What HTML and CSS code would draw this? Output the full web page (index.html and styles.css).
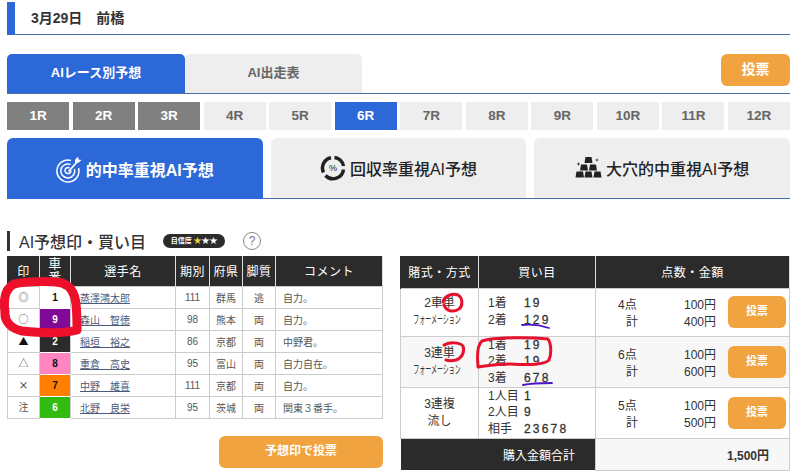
FILE: index.html

```html
<!DOCTYPE html>
<html>
<head>
	<meta charset="utf-8">
	<title>AI予想</title>
	<link rel="stylesheet" href="styles.css">
</head>
<body>
	<div class="race-head">3月29日　前橋</div>

	<div class="tabs">
		<a class="tab active">AIレース別予想</a>
		<a class="tab">AI出走表</a>
		<a class="btn vote-top">投票</a>
	</div>

	<div class="races">
		<a class="race done">1R</a>
		<a class="race done">2R</a>
		<a class="race done">3R</a>
		<a class="race">4R</a>
		<a class="race">5R</a>
		<a class="race now">6R</a>
		<a class="race">7R</a>
		<a class="race">8R</a>
		<a class="race">9R</a>
		<a class="race">10R</a>
		<a class="race">11R</a>
		<a class="race">12R</a>
	</div>

	<div class="modes">
		<a class="mode active">
			<svg class="mode-icon" viewBox="0 0 26 28" fill="none" stroke="#fff" stroke-width="1.5">
				<path d="M15 5.5A11 11 0 1 0 22.500 13"/>
				<path d="M14.500 9.500A7 7 0 1 0 18.500 14"/>
				<path d="M13.500 13A3 3 0 1 0 15 15.500"/>
				<path d="M12.500 16.500L21 7" stroke-width="1.800"/>
				<path d="M19 5l3-3.500 .5 3 3 .5-3.500 3-3-.5z" fill="#fff" stroke="none"/>
			</svg>
			的中率重視AI予想
		</a>
		<a class="mode">
			<span class="donut">
				<svg viewBox="0 0 26 26" fill="none" stroke="#222" stroke-width="3.500">
					<path d="M14.500 2.500A10.500 10.500 0 0 1 23.500 11"/>
					<path d="M23.500 14.500A10.500 10.500 0 0 1 5.500 20.500"/>
					<path d="M3.500 17.500A10.500 10.500 0 0 1 11 2.700"/>
				</svg>
				<span class="pct">%</span>
			</span>
			回収率重視AI予想
		</a>
		<a class="mode">
			<svg class="mode-icon gold" viewBox="0 0 27 22" fill="#222">
				<path d="M10.500 1h6l1 6h-8z"/>
				<path d="M6 8.500h6l1 6H5zM15 8.500h6l1 6h-8z"/>
				<path d="M1.500 15.500h6.500l1 6H.500zM10.500 15.500h6l1 6h-8zM19.500 15.500h6l1 6h-8z"/>
				<path d="M3.500 6l.5 1.500L5.500 8 4 8.500 3.500 10 3 8.500 1.500 8 3 7.500zM22 2l.4 1.600L24 4l-1.600.4L22 6l-.4-1.600L20 4l1.600-.4z"/>
			</svg>
			大穴的中重視AI予想
		</a>
	</div>

	<div class="section-title">
		<h2>AI予想印・買い目</h2>
		<span class="trust">自信度 <i class="star-on">★</i><i>★★</i></span>
		<span class="help">?</span>
	</div>

	<div class="columns">
		<div class="left">
			<table class="players">
				<colgroup>
					<col class="c-mark"><col class="c-num"><col class="c-name"><col class="c-term"><col class="c-pref"><col class="c-leg"><col>
				</colgroup>
				<thead>
					<tr><th>印</th><th class="tight">車<br>番</th><th>選手名</th><th>期別</th><th>府県</th><th>脚質</th><th>コメント</th></tr>
				</thead>
				<tbody>
					<tr><td class="mark">◎</td><td class="num n1">1</td><td class="name"><a>蒸澤鴻太郎</a></td><td>111</td><td>群馬</td><td>逃</td><td class="note">自力。</td></tr>
					<tr><td class="mark">○</td><td class="num n9">9</td><td class="name"><a>森山　智徳</a></td><td>98</td><td>熊本</td><td>両</td><td class="note">自力。</td></tr>
					<tr><td class="mark dark">▲</td><td class="num n2">2</td><td class="name"><a>稲垣　裕之</a></td><td>86</td><td>京都</td><td>両</td><td class="note">中野君。</td></tr>
					<tr><td class="mark">△</td><td class="num n8">8</td><td class="name"><a>重倉　高史</a></td><td>95</td><td>富山</td><td>両</td><td class="note">自力自在。</td></tr>
					<tr><td class="mark dark">×</td><td class="num n7">7</td><td class="name"><a>中野　雄喜</a></td><td>111</td><td>京都</td><td>両</td><td class="note">自力。</td></tr>
					<tr><td class="mark">注</td><td class="num n6">6</td><td class="name"><a>北野　良栄</a></td><td>95</td><td>茨城</td><td>両</td><td class="note">関東３番手。</td></tr>
				</tbody>
			</table>
			<div class="vote-wrap"><a class="btn vote-marks">予想印で投票</a></div>
		</div>

		<table class="bets">
			<colgroup><col class="c-type"><col class="c-pick"><col></colgroup>
			<thead>
				<tr><th>賭式・方式</th><th>買い目</th><th>点数・金額</th></tr>
			</thead>
			<tbody>
				<tr class="r1">
					<td class="type">2車単<br><span class="small"><span>フォーメーション</span></span></td>
					<td>
						<div class="pick"><span>1着</span><b>19</b><span>2着</span><b>129</b></div>
					</td>
					<td>
						<div class="money">
							<span>4点</span><span class="yen">100円</span>
							<span>計</span><span class="yen">400円</span>
							<a class="btn vote-row">投票</a>
						</div>
					</td>
				</tr>
				<tr class="r2">
					<td class="type">3連単<br><span class="small"><span>フォーメーション</span></span></td>
					<td>
						<div class="pick"><span>1着</span><b>19</b><span>2着</span><b>19</b><span>3着</span><b>678</b></div>
					</td>
					<td>
						<div class="money">
							<span>6点</span><span class="yen">100円</span>
							<span>計</span><span class="yen">600円</span>
							<a class="btn vote-row">投票</a>
						</div>
					</td>
				</tr>
				<tr class="r3">
					<td class="type">3連複<br>流し</td>
					<td>
						<div class="pick"><span>1人目</span><b>1</b><span>2人目</span><b>9</b><span>相手</span><b>23678</b></div>
					</td>
					<td>
						<div class="money">
							<span>5点</span><span class="yen">100円</span>
							<span>計</span><span class="yen">500円</span>
							<a class="btn vote-row">投票</a>
						</div>
					</td>
				</tr>
				<tr class="total">
					<th colspan="2">購入金額合計</th>
					<td>1,500円</td>
				</tr>
			</tbody>
		</table>
	</div>

	<!-- hand drawn marks on top of the screenshot -->
	<svg class="marks" viewBox="0 0 796 476" fill="none" stroke-linecap="round" stroke-linejoin="round">
		<path class="red-thick" d="M5 312C3 298 6 288 14 284C28 281 50 281 62 283C71 286 75 294 76 304C77 314 77 322 77 330C62 334 40 333 22 331C12 329 4 322 5 312Z"/>
		<path class="red-thin" d="M443 302C444 296 452 293 458 295C463 298 463 306 459 309C453 313 446 311 444 305"/>
		<path class="red-thin" d="M444 345C450 342 459 342 463 346C465 352 462 358 456 360C452 361 449 361 446 360"/>
		<path class="red-thin" d="M478 366C477 355 477 345 482 341C495 337 530 337 548 339C552 345 551 356 549 360C544 365 530 365 510 364C498 364 486 366 478 367"/>
		<path class="purple" d="M522 325C530 324 540 325 549 328"/>
		<path class="purple" d="M523 385C532 383 543 383 552 383"/>
	</svg>
</body>
</html>
```

FILE: styles.css

```css
* {
  box-sizing: border-box;
}
body {
  position: relative;
  width: 796px;
  height: 476px;
  margin: 0;
  padding: 2px 6px 0 7px;
  overflow: hidden;
  background: #fff;
  color: #333;
  font-family: "Liberation Sans", "Noto Sans CJK JP", sans-serif;
  font-size: 12px;
}
.race-head {
  height: 33px;
  padding-left: 16px;
  border-left: 8px solid #2d68d8;
  border-bottom: 1px solid #4a6ea8;
  font-size: 14px;
  font-weight: bold;
  line-height: 32px;
}

/* tabs */
.tabs {
  display: flex;
  height: 40px;
  margin-top: 19px;
  border-bottom: 1px solid #4a6ea8;
}
.tab {
  width: 178px;
  height: 39px;
  border-radius: 5px 5px 0 0;
  background: #eee;
  color: #666;
  font-size: 13px;
  font-weight: bold;
  line-height: 37px;
  text-align: center;
}
.tab:nth-child(2) {
  width: 177px;
}
.tab.active {
  background: #2d68d8;
  color: #fff;
}
.btn {
  display: block;
  border-radius: 6px;
  background: #f0a33f;
  color: #fff;
  font-weight: bold;
  text-align: center;
}
.vote-top {
  width: 69px;
  height: 32px;
  margin-left: auto;
  font-size: 14px;
  line-height: 31px;
}

/* race numbers */
.races {
  display: grid;
  grid-template-columns: repeat(12, 1fr);
  column-gap: 3.500px;
  margin-top: 8px;
}
.race {
  height: 28px;
  background: #eee;
  color: #666;
  font-size: 13.500px;
  font-weight: bold;
  line-height: 27px;
  text-align: center;
}
.race.done {
  background: #808080;
  color: #fff;
}
.race.now {
  background: #2d68d8;
  color: #fff;
}

/* big mode tabs */
.modes {
  display: grid;
  grid-template-columns: repeat(3, 1fr);
  column-gap: 8px;
  height: 61px;
  margin-top: 8px;
  border-bottom: 1px solid #4a6ea8;
}
.mode {
  display: flex;
  align-items: center;
  justify-content: center;
  height: 60px;
  border-radius: 6px 6px 0 0;
  background: #eee;
  color: #222;
  font-size: 16px;
  font-weight: 500;
}
.mode.active {
  height: 61px;
  background: #2d68d8;
  color: #fff;
  font-weight: bold;
}
.mode-icon {
  width: 26px;
  height: 28px;
  margin-right: 4px;
}
.mode-icon.gold {
  width: 27px;
  height: 22px;
  margin-bottom: 3px;
}
.donut {
  position: relative;
  width: 26px;
  height: 26px;
  margin-right: 4px;
}
.donut svg {
  display: block;
  width: 26px;
  height: 26px;
}
.pct {
  position: absolute;
  top: 0;
  left: 0;
  width: 26px;
  font-size: 9px;
  line-height: 26px;
  text-align: center;
}

/* section title */
.section-title {
  display: flex;
  align-items: center;
  height: 20px;
  margin-top: 32px;
  padding-left: 9px;
  border-left: 3px solid #333;
}
.section-title h2 {
  margin: 0;
  font-size: 16px;
  font-weight: 500;
}
.trust {
  width: 62px;
  height: 14px;
  margin-left: 17px;
  border-radius: 7px;
  background: #2b2b2b;
  color: #fff;
  font-size: 7px;
  font-weight: bold;
  line-height: 14px;
  text-align: center;
  white-space: nowrap;
}
.trust i {
  font-size: 8px;
  font-style: normal;
}
.trust .star-on {
  color: #f2cf3a;
}
.help {
  width: 18px;
  height: 18px;
  margin-left: 18px;
  border: 1px solid #888;
  border-radius: 50%;
  color: #777;
  font-size: 12px;
  line-height: 16px;
  text-align: center;
}

/* tables */
.columns {
  display: flex;
  align-items: flex-start;
  margin-top: 5px;
}
.left {
  width: 376px;
  margin-right: 17px;
}
table {
  border-collapse: collapse;
  table-layout: fixed;
}
th {
  background: #2b2b2b;
  color: #fff;
  font-weight: normal;
  text-align: center;
  border-left: 1px solid #ddd;
  border-right: 1px solid #ddd;
}
.players {
  width: 376px;
  font-size: 10px;
  color: #555;
}
.c-mark { width: 32px; }
.c-num { width: 31px; }
.c-name { width: 105px; }
.c-term { width: 34px; }
.c-pref { width: 33px; }
.c-leg { width: 33px; }
.players th {
  height: 30px;
  padding: 0;
  font-size: 12px;
  letter-spacing: 0.500px;
}
.players th:first-child,
.bets th:first-child {
  border-left-color: #2b2b2b;
}
.players th.tight {
  font-size: 13px;
  line-height: 14px;
}
.players td {
  height: 22px;
  padding: 0;
  border: 1px solid #ccc;
  text-align: center;
}
.players td.mark {
  font-family: "Noto Sans CJK JP", sans-serif;
  font-size: 10px;
  line-height: 14px;
}
.players td.dark {
  color: #111;
}
.players .num {
  border-top: 1px solid #fff;
  border-bottom: 1px solid #fff;
  font-weight: bold;
  color: #111;
}
.n1 { background: #fff; }
.n2 { background: #2b2b2b; color: #fff !important; }
.n6 { background: #33bb11; color: #fff !important; }
.n7 { background: #ff8000; }
.n8 { background: #ff85c0; }
.n9 { background: #800a96; color: #fff !important; }
.players td.name {
  padding-left: 9px;
  text-align: left;
}
.players td.note {
  padding-left: 7px;
  text-align: left;
}
.name a {
  color: #4a5a7a;
  text-decoration: underline;
}
.vote-wrap {
  display: flex;
  justify-content: flex-end;
  margin-top: 17px;
}
.vote-marks {
  width: 164px;
  height: 32px;
  font-size: 12px;
  line-height: 31px;
}

.bets {
  width: 390px;
  font-size: 12px;
}
.c-type { width: 78px; }
.c-pick { width: 117px; }
.bets thead th {
  height: 32px;
  padding: 0;
  font-size: 12px;
  letter-spacing: 0.500px;
}
.bets td {
  padding: 0;
  border: 1px solid #ccc;
}
.r1 td { height: 48px; }
.r2 td { height: 51px; background: #f7f7f7; }
.r3 td { height: 51px; }
.type {
  line-height: 17px;
  text-align: center;
}
.small {
  display: block;
  height: 17px;
  overflow: hidden;
  white-space: nowrap;
}
.small span {
  display: inline-block;
  width: 96px;
  margin-left: -12px;
  font-size: 12px;
  transform: scaleX(0.5);
}
.pick {
  display: grid;
  grid-template-columns: 36px auto;
  padding-left: 9px;
  line-height: 17px;
}
.r2 .pick,
.r3 .pick {
  line-height: 16.500px;
}
.pick b {
  letter-spacing: 2.200px;
  font-weight: normal;
  -webkit-text-stroke: 0.300px #333;
}
.money {
  display: grid;
  grid-template-columns: 20px 78px 70px;
  grid-template-rows: 17px 17px;
  align-items: center;
  padding-left: 22px;
  white-space: nowrap;
}
.money > span:nth-child(3) {
  text-align: right;
}
.yen {
  text-align: right;
}
.vote-row {
  grid-column: 3;
  grid-row: 1 / 3;
  width: 58px;
  height: 32px;
  margin-left: 12px;
  font-size: 11px;
  line-height: 31px;
}
.total th {
  height: 32px;
  padding: 0 20px 0 0;
  border: 0;
  font-size: 12px;
  text-align: right;
}
.total td {
  height: 32px;
  padding-right: 20px;
  background: #f7f7f7;
  font-weight: bold;
  text-align: right;
}

/* annotations */
.marks {
  position: absolute;
  top: 0;
  left: 0;
  width: 796px;
  height: 476px;
  pointer-events: none;
}
.red-thick {
  stroke: #ee0f2b;
  stroke-width: 9;
}
.red-thin {
  stroke: #e8112d;
  stroke-width: 3;
}
.purple {
  stroke: #4a14c8;
  stroke-width: 1.800;
}
```
